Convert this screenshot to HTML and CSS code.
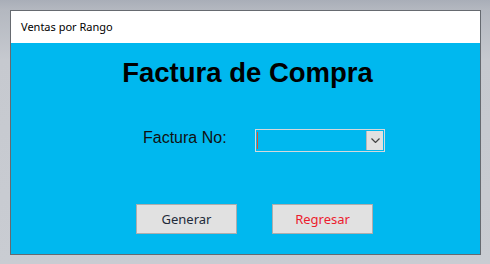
FILE: index.html
```html
<!DOCTYPE html>
<html lang="es">
<head>
    <meta charset="UTF-8">
    <title>Ventas por Rango</title>
    <link rel="stylesheet" href="styles.css">
</head>
<body>
    <div class="window">
        <div class="titlebar">Ventas por Rango</div>
        <div class="content">
            <h2>Factura de Compra</h2>
            <div class="row">
                <label for="factura">Factura No:</label>
                <div class="combo">
                    <span class="caret"></span>
                    <span class="drop">
                        <svg width="9" height="5" viewBox="0 0 9 5">
                            <path d="M0.5 0.5 L4.5 4.5 L8.5 0.5" fill="none" stroke="#444" stroke-width="1.2"/>
                        </svg>
                    </span>
                </div>
            </div>
            <div class="buttons">
                <button class="btn">Generar</button>
                <button class="btn back">Regresar</button>
            </div>
        </div>
    </div>
</body>
</html>
```

FILE: styles.css
```css
body {
    margin: 0;
    height: 264px;
    overflow: hidden;
    background: linear-gradient(to bottom, #a9aeb8 0px, #b4b8c0 10px, #c6c9cf 60px, #c9ccd2 100%);
    font-family: 'Liberation Sans', Arial, sans-serif;
}
.window {
    margin: 10px 0 0 10px;
    width: 469px;
    height: 243px;
    border: 1px solid #666a70;
    display: flex;
    flex-direction: column;
}
.titlebar {
    height: 32px;
    background: #ffffff;
    font-family: 'Noto Sans', sans-serif;
    font-size: 11px;
    line-height: 32px;
    padding-left: 10px;
    color: #000;
}
.content {
    flex: 1;
    background: #00b8ef;
    padding-top: 14px;
}
h2 {
    margin: 0;
    text-align: center;
    font-size: 27.5px;
    line-height: 32px;
    font-weight: bold;
    color: #000;
    padding-left: 4px;
}
.row {
    display: flex;
    margin-top: 40px;
    padding-left: 132px;
}
label {
    width: 112px;
    font-size: 16px;
    line-height: 18px;
    color: #111;
}
.combo {
    width: 128px;
    height: 21px;
    border: 1px solid #d4d8dc;
    display: flex;
    justify-content: space-between;
}
.caret {
    width: 1px;
    height: 17px;
    margin: 2px 0 0 1px;
    background: #e0502a;
}
.drop {
    width: 16px;
    height: 19px;
    margin: 1px 1px 0 0;
    background: #e1e1e1;
    border-left: 1px solid #b8b8b8;
    display: flex;
    align-items: center;
    justify-content: center;
}
.buttons {
    display: flex;
    gap: 35px;
    margin-top: 52px;
    padding-left: 125px;
}
.btn {
    width: 101px;
    height: 30px;
    background: #e1e1e1;
    border: 1px solid #adadad;
    font-family: 'Noto Sans', sans-serif;
    font-size: 13px;
    color: #222a3a;
    padding: 0;
}
.back {
    color: #ec1c2e;
}
```
